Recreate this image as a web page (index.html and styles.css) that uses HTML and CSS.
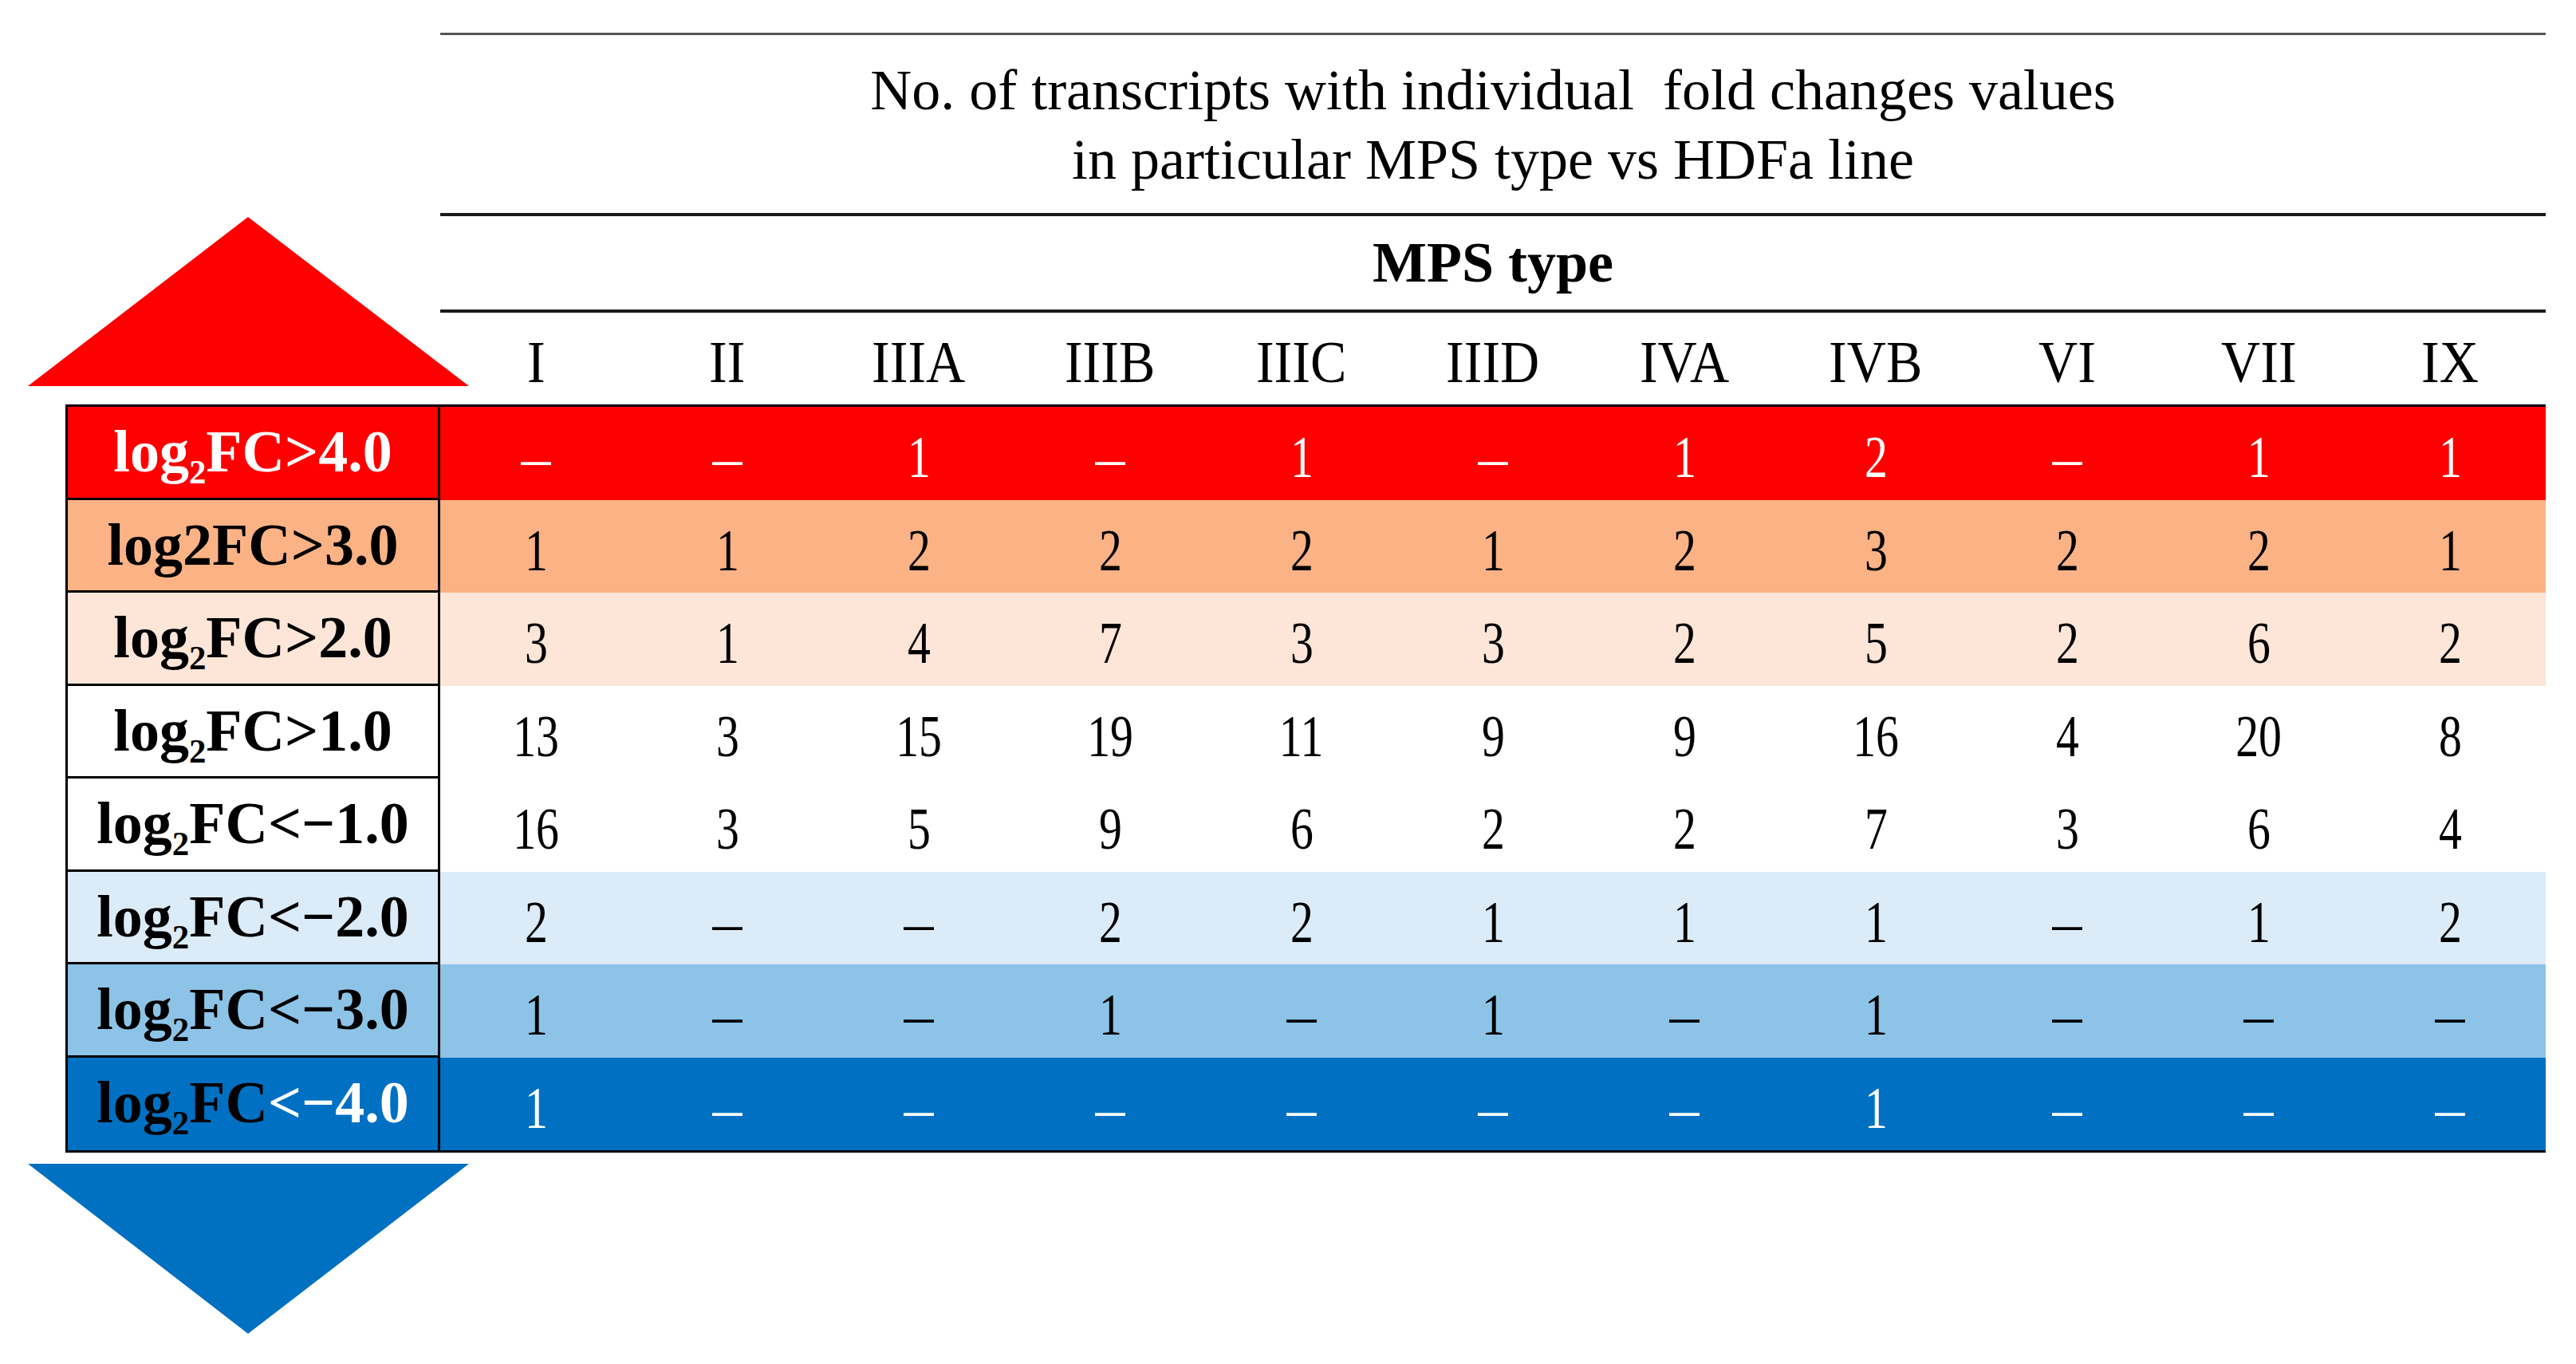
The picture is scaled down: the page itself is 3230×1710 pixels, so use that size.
FILE: index.html
```html
<!DOCTYPE html>
<html lang="en">
<head>
<meta charset="utf-8">
<title>Fold changes by MPS type</title>
<link rel="stylesheet" href="styles.css">
</head>
<body>
<div class="figure">
  <div class="tri-up">
    <svg width="553" height="212" viewBox="0 0 553 212"><polygon points="0,212 276,0 553,212" fill="#FF0000"/></svg>
  </div>
  <div class="head">
    <div class="rule rule-top"></div>
    <div class="title">
      <div>No. of transcripts with individual&nbsp; fold changes values</div>
      <div>in particular MPS type vs HDFa line</div>
    </div>
    <div class="rule"></div>
    <div class="mps">MPS type</div>
    <div class="rule"></div>
    <div class="cols">
      <div class="col"><span>I</span></div>
      <div class="col"><span>II</span></div>
      <div class="col"><span>IIIA</span></div>
      <div class="col"><span>IIIB</span></div>
      <div class="col"><span>IIIC</span></div>
      <div class="col"><span>IIID</span></div>
      <div class="col"><span>IVA</span></div>
      <div class="col"><span>IVB</span></div>
      <div class="col"><span>VI</span></div>
      <div class="col"><span>VII</span></div>
      <div class="col"><span>IX</span></div>
    </div>
  </div>
  <div class="table">
    <div class="row up4">
      <div class="label">log<sub>2</sub>FC&gt;4.0</div>
      <div class="cell"><span class="d">–</span></div>
      <div class="cell"><span class="d">–</span></div>
      <div class="cell"><span class="n">1</span></div>
      <div class="cell"><span class="d">–</span></div>
      <div class="cell"><span class="n">1</span></div>
      <div class="cell"><span class="d">–</span></div>
      <div class="cell"><span class="n">1</span></div>
      <div class="cell"><span class="n">2</span></div>
      <div class="cell"><span class="d">–</span></div>
      <div class="cell"><span class="n">1</span></div>
      <div class="cell"><span class="n">1</span></div>
    </div>
    <div class="row up3">
      <div class="label">log2FC&gt;3.0</div>
      <div class="cell"><span class="n">1</span></div>
      <div class="cell"><span class="n">1</span></div>
      <div class="cell"><span class="n">2</span></div>
      <div class="cell"><span class="n">2</span></div>
      <div class="cell"><span class="n">2</span></div>
      <div class="cell"><span class="n">1</span></div>
      <div class="cell"><span class="n">2</span></div>
      <div class="cell"><span class="n">3</span></div>
      <div class="cell"><span class="n">2</span></div>
      <div class="cell"><span class="n">2</span></div>
      <div class="cell"><span class="n">1</span></div>
    </div>
    <div class="row up2">
      <div class="label">log<sub>2</sub>FC&gt;2.0</div>
      <div class="cell"><span class="n">3</span></div>
      <div class="cell"><span class="n">1</span></div>
      <div class="cell"><span class="n">4</span></div>
      <div class="cell"><span class="n">7</span></div>
      <div class="cell"><span class="n">3</span></div>
      <div class="cell"><span class="n">3</span></div>
      <div class="cell"><span class="n">2</span></div>
      <div class="cell"><span class="n">5</span></div>
      <div class="cell"><span class="n">2</span></div>
      <div class="cell"><span class="n">6</span></div>
      <div class="cell"><span class="n">2</span></div>
    </div>
    <div class="row up1">
      <div class="label">log<sub>2</sub>FC&gt;1.0</div>
      <div class="cell"><span class="n">13</span></div>
      <div class="cell"><span class="n">3</span></div>
      <div class="cell"><span class="n">15</span></div>
      <div class="cell"><span class="n">19</span></div>
      <div class="cell"><span class="n">11</span></div>
      <div class="cell"><span class="n">9</span></div>
      <div class="cell"><span class="n">9</span></div>
      <div class="cell"><span class="n">16</span></div>
      <div class="cell"><span class="n">4</span></div>
      <div class="cell"><span class="n">20</span></div>
      <div class="cell"><span class="n">8</span></div>
    </div>
    <div class="row dn1">
      <div class="label">log<sub>2</sub>FC&lt;−1.0</div>
      <div class="cell"><span class="n">16</span></div>
      <div class="cell"><span class="n">3</span></div>
      <div class="cell"><span class="n">5</span></div>
      <div class="cell"><span class="n">9</span></div>
      <div class="cell"><span class="n">6</span></div>
      <div class="cell"><span class="n">2</span></div>
      <div class="cell"><span class="n">2</span></div>
      <div class="cell"><span class="n">7</span></div>
      <div class="cell"><span class="n">3</span></div>
      <div class="cell"><span class="n">6</span></div>
      <div class="cell"><span class="n">4</span></div>
    </div>
    <div class="row dn2">
      <div class="label">log<sub>2</sub>FC&lt;−2.0</div>
      <div class="cell"><span class="n">2</span></div>
      <div class="cell"><span class="d">–</span></div>
      <div class="cell"><span class="d">–</span></div>
      <div class="cell"><span class="n">2</span></div>
      <div class="cell"><span class="n">2</span></div>
      <div class="cell"><span class="n">1</span></div>
      <div class="cell"><span class="n">1</span></div>
      <div class="cell"><span class="n">1</span></div>
      <div class="cell"><span class="d">–</span></div>
      <div class="cell"><span class="n">1</span></div>
      <div class="cell"><span class="n">2</span></div>
    </div>
    <div class="row dn3">
      <div class="label">log<sub>2</sub>FC&lt;−3.0</div>
      <div class="cell"><span class="n">1</span></div>
      <div class="cell"><span class="d">–</span></div>
      <div class="cell"><span class="d">–</span></div>
      <div class="cell"><span class="n">1</span></div>
      <div class="cell"><span class="d">–</span></div>
      <div class="cell"><span class="n">1</span></div>
      <div class="cell"><span class="d">–</span></div>
      <div class="cell"><span class="n">1</span></div>
      <div class="cell"><span class="d">–</span></div>
      <div class="cell"><span class="d">–</span></div>
      <div class="cell"><span class="d">–</span></div>
    </div>
    <div class="row dn4">
      <div class="label">log<sub>2</sub>FC<span class="light">&lt;−4.0</span></div>
      <div class="cell"><span class="n">1</span></div>
      <div class="cell"><span class="d">–</span></div>
      <div class="cell"><span class="d">–</span></div>
      <div class="cell"><span class="d">–</span></div>
      <div class="cell"><span class="d">–</span></div>
      <div class="cell"><span class="d">–</span></div>
      <div class="cell"><span class="d">–</span></div>
      <div class="cell"><span class="n">1</span></div>
      <div class="cell"><span class="d">–</span></div>
      <div class="cell"><span class="d">–</span></div>
      <div class="cell"><span class="d">–</span></div>
    </div>
  </div>
  <div class="tri-down">
    <svg width="553" height="213" viewBox="0 0 553 213"><polygon points="0,0 553,0 276,213" fill="#0070C0"/></svg>
  </div>
</div>
</body>
</html>
```

FILE: styles.css
```css
html, body {
  margin: 0;
  padding: 0;
  background: #ffffff;
}

body {
  font-family: "Liberation Serif", "Times New Roman", serif;
  color: #000000;
}

.figure {
  display: grid;
  grid-template-columns: 515px 2640px;
  margin: 41px 0 0 37px;
}

.tri-up {
  grid-column: 1;
  grid-row: 1;
  align-self: end;
  margin: 0 0 23px -2px;
  width: 515px;
}

.tri-up svg,
.tri-down svg {
  display: block;
}

.head {
  grid-column: 2;
  grid-row: 1;
  display: flex;
  flex-direction: column;
}

.rule {
  height: 4px;
  background: #1a1a1a;
}

.rule-top {
  height: 3px;
  background: #555555;
}

.title {
  height: 223px;
  box-sizing: border-box;
  padding-top: 26px;
  font-size: 72px;
  line-height: 87px;
  text-align: center;
  white-space: nowrap;
}

.mps {
  height: 117px;
  font-size: 72px;
  line-height: 117px;
  font-weight: bold;
  text-align: center;
}

.cols {
  display: grid;
  grid-template-columns: repeat(11, 240px);
  height: 115px;
  box-sizing: border-box;
  padding-top: 10px;
  font-size: 74px;
  line-height: 105px;
  text-align: center;
}

.col span {
  display: inline-block;
  transform: scaleX(0.92);
}

.table {
  grid-column: 1 / -1;
  grid-row: 2;
  margin-left: 45px;
  border-top: 3px solid #000000;
  border-bottom: 3px solid #000000;
}

.row {
  display: grid;
  grid-template-columns: 470px repeat(11, 240px);
  height: 116.5px;
}

.label {
  box-sizing: border-box;
  border-left: 3px solid #000000;
  border-right: 3px solid #000000;
  border-bottom: 3px solid #000000;
  font-size: 74px;
  font-weight: bold;
  line-height: 113.5px;
  text-align: center;
  white-space: nowrap;
}

.row:last-child .label {
  border-bottom: none;
}

.label sub {
  font-size: 0.58em;
  line-height: 0;
  vertical-align: -15px;
}

.cell {
  box-sizing: border-box;
  padding-top: 10px;
  font-size: 74px;
  line-height: 106.5px;
  text-align: center;
}

.cell .n {
  display: inline-block;
  transform: scaleX(0.78);
}

.up4 { background: #FF0000; color: #ffffff; }
.up3 { background: #FBB285; }
.up2 { background: #FDE6D8; }
.up1 { background: #ffffff; }
.dn1 { background: #ffffff; }
.dn2 { background: #DBEBF7; }
.dn3 { background: #8DC3E7; }
.dn4 { background: #0070C3; }
.dn4 .cell { color: #ffffff; }
.dn4 .light { color: #ffffff; }

.tri-down {
  grid-column: 1;
  grid-row: 3;
  margin: 14px 0 0 -2px;
  width: 515px;
}
```
